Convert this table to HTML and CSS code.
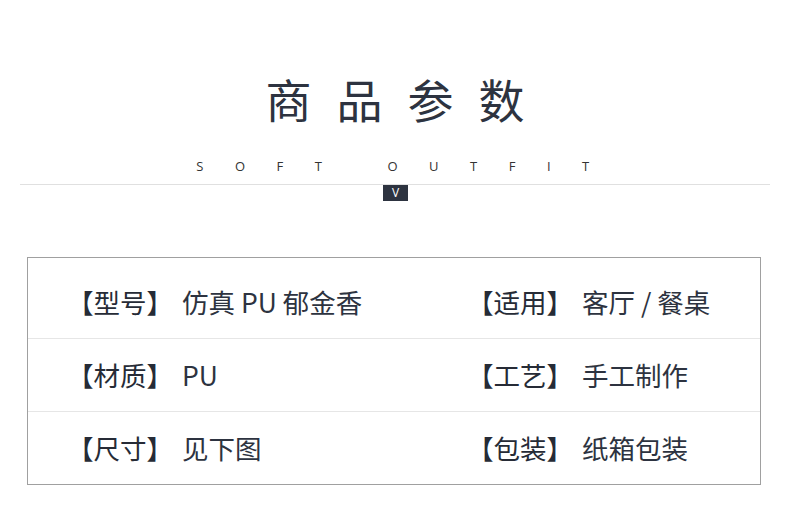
FILE: index.html
```html
<!DOCTYPE html>
<html lang="zh">
<head>
<meta charset="utf-8">
<link rel="stylesheet" href="styles.css">
</head>
<body>
<div class="page">
  <header class="head">
    <h1 class="title">商品参数</h1>
    <div class="sub"><span>SOFT</span><span>OUTFIT</span></div>
    <div class="rule"><span class="tag">V</span></div>
  </header>
  <section class="params">
    <div class="row">
      <div class="cell"><span class="lab">【型号】</span><span class="val">仿真 PU 郁金香</span></div>
      <div class="cell"><span class="lab">【适用】</span><span class="val">客厅 / 餐桌</span></div>
    </div>
    <div class="row">
      <div class="cell"><span class="lab">【材质】</span><span class="val">PU</span></div>
      <div class="cell"><span class="lab">【工艺】</span><span class="val">手工制作</span></div>
    </div>
    <div class="row">
      <div class="cell"><span class="lab">【尺寸】</span><span class="val">见下图</span></div>
      <div class="cell"><span class="lab">【包装】</span><span class="val">纸箱包装</span></div>
    </div>
  </section>
</div>
</body>
</html>
```
FILE: styles.css
```css
* { box-sizing: border-box; margin: 0; padding: 0; }
html, body { background: #fff; }
body {
  width: 790px;
  height: 517px;
  font-family: "Noto Sans CJK SC", "Noto Sans", sans-serif;
  color: #2d3340;
  overflow: hidden;
}
.page { padding-top: 67px; }
.head { display: flex; flex-direction: column; align-items: center; }
.title {
  font-size: 46px;
  font-weight: 400;
  line-height: 62px;
  letter-spacing: 25px;
  margin-right: -25px;
  color: #2d3340;
}
.sub {
  margin-top: 29px;
  display: flex;
  gap: 34px;
  font-family: "Open Sans", sans-serif;
  font-size: 13px;
  line-height: 16px;
  letter-spacing: 31.5px;
  color: #333;
  margin-right: -31px;
  margin-left: -4px;
}
.rule {
  margin-top: 10px;
  width: 750px;
  border-top: 1px solid #e0e0e0;
  display: flex;
  justify-content: center;
}
.tag {
  width: 25px;
  height: 16px;
  background: #2d3340;
  color: #fff;
  font-family: "Open Sans", sans-serif;
  font-size: 12px;
  line-height: 16px;
  text-align: center;
  margin-left: 1px;
}
.params {
  margin: 56px 0 0 27px;
  width: 734px;
  border: 1px solid #a0a0a0;
  padding-top: 8px;
}
.row {
  display: grid;
  grid-template-columns: 400px 1fr;
  height: 73px;
  align-items: center;
  border-bottom: 1px solid #e6e6e6;
}
.row:last-child { border-bottom: none; height: 72px; }
.cell {
  display: flex;
  align-items: center;
  padding-left: 39px;
  font-size: 26.5px;
  line-height: 30px;
}
.lab { width: 115px; flex: none; color: #262b36; }
.val { color: #2d3340; }
```
